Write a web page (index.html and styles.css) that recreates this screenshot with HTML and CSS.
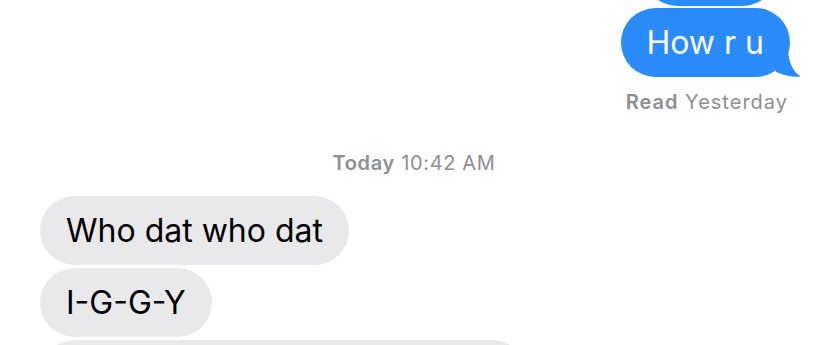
FILE: index.html
```html
<!DOCTYPE html>
<html lang="en">
<head>
    <meta charset="UTF-8">
    <meta name="viewport" content="width=device-width, initial-scale=1.0">
    <title>Messages</title>
    <link rel="stylesheet" href="styles.css">
</head>
<body>
    <div class="thread">
        <div class="group sent">
            <div class="bubble sent-bubble first"></div>
            <div class="bubble sent-bubble last">How r u
                <svg class="tail" width="26" height="30" viewBox="0 0 26 30">
                    <path d="M0 0 L12 0 C12 13 16 24 24.5 29.6 C17 30.4 8 28.5 0 25 Z" fill="#2a8cfb"/>
                </svg>
            </div>
            <div class="receipt"><b>Read</b> Yesterday</div>
        </div>
        <div class="stamp"><b>Today</b> 10:42 AM</div>
        <div class="group received">
            <div class="bubble recv-bubble">Who dat who dat</div>
            <div class="bubble recv-bubble">I-G-G-Y</div>
            <div class="bubble recv-bubble wide"></div>
        </div>
    </div>
</body>
</html>
```

FILE: styles.css
```css
/* Global Styles */
* {
    box-sizing: border-box;
    margin: 0;
    padding: 0;
}
body {
    font-family: Inter, 'Noto Sans', sans-serif;
    background: #ffffff;
    width: 828px;
    height: 345px;
    overflow: hidden;
}
.thread {
    display: flex;
    flex-direction: column;
}
/* Message groups */
.group {
    display: flex;
    flex-direction: column;
    gap: 2px;
}
.group.sent {
    align-items: flex-end;
    padding-right: 38px;
}
.group.received {
    align-items: flex-start;
    padding-left: 40px;
    gap: 3px;
    margin-top: 21px;
}
.bubble {
    position: relative;
    height: 69px;
    padding: 0 26px;
    border-radius: 35px;
    font-size: 32px;
    line-height: 69px;
    white-space: nowrap;
}
.sent-bubble {
    background: #2a8cfb;
    color: #ffffff;
}
.sent-bubble.last {
    padding: 0 26px 0 25px;
}
.sent-bubble.first {
    margin-top: -63px;
    margin-right: 13px;
    width: 134px;
}
/* tail on the last sent bubble */
.tail {
    position: absolute;
    right: -12px;
    bottom: 0;
    display: block;
}
.recv-bubble {
    background: #e9e9eb;
    color: #000000;
}
.recv-bubble.wide {
    width: 487px;
}
/* Timestamps */
.receipt {
    margin-top: 12px;
    font-size: 20px;
    line-height: 23px;
    letter-spacing: 1px;
    color: #8e8e93;
    margin-right: 2px;
}
.stamp {
    margin-top: 38px;
    font-size: 20px;
    line-height: 23px;
    letter-spacing: 0.65px;
    color: #8e8e93;
    text-align: center;
}
.receipt b,
.stamp b {
    font-weight: 600;
}
```
